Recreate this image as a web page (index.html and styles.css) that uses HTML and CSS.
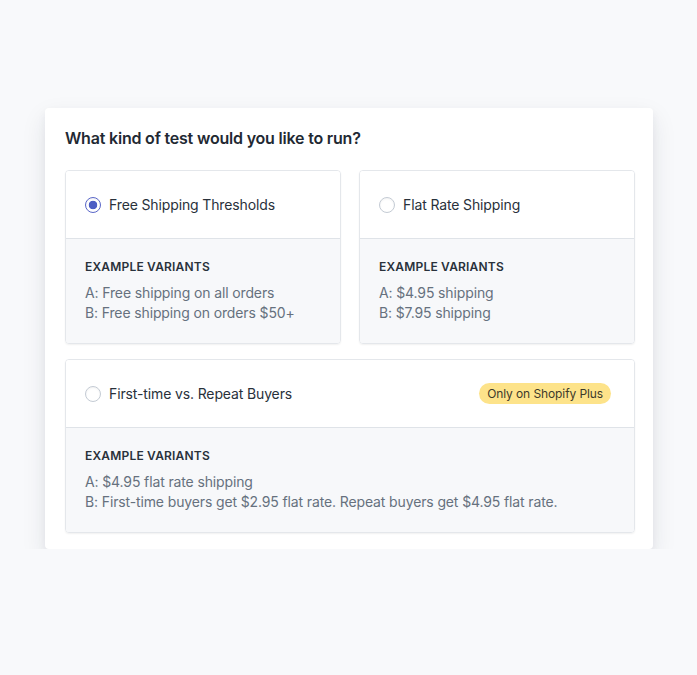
FILE: index.html
```html
<!DOCTYPE html>
<html>
<head>
<meta charset="utf-8">
<link rel="stylesheet" href="styles.css">
</head>
<body>
<div class="panel">
  <h2 class="title">What kind of test would you like to run?</h2>
  <div class="grid">
    <div class="option">
      <div class="option-head">
        <span class="radio checked"></span>
        <span class="option-label">Free Shipping Thresholds</span>
      </div>
      <div class="option-body">
        <div class="ex-label">EXAMPLE VARIANTS</div>
        <div class="ex-line">A: Free shipping on all orders</div>
        <div class="ex-line">B: Free shipping on orders $50+</div>
      </div>
    </div>
    <div class="option">
      <div class="option-head">
        <span class="radio"></span>
        <span class="option-label">Flat Rate Shipping</span>
      </div>
      <div class="option-body">
        <div class="ex-label">EXAMPLE VARIANTS</div>
        <div class="ex-line">A: $4.95 shipping</div>
        <div class="ex-line">B: $7.95 shipping</div>
      </div>
    </div>
    <div class="option wide">
      <div class="option-head">
        <span class="radio"></span>
        <span class="option-label">First-time vs. Repeat Buyers</span>
        <span class="badge">Only on Shopify Plus</span>
      </div>
      <div class="option-body">
        <div class="ex-label">EXAMPLE VARIANTS</div>
        <div class="ex-line">A: $4.95 flat rate shipping</div>
        <div class="ex-line">B: First-time buyers get $2.95 flat rate. Repeat buyers get $4.95 flat rate.</div>
      </div>
    </div>
  </div>
</div>
</body>
</html>
```
FILE: styles.css
```css
* { box-sizing: border-box; }
html, body {
  margin: 0;
  padding: 0;
  background: #f8f9fb;
  font-family: Inter, "Noto Sans", sans-serif;
}
body {
  padding: 108px 44px 0 45px;
}
.panel {
  width: 608px;
  background: #ffffff;
  border-radius: 4px;
  padding: 20px 18px 16px 20px;
  box-shadow: 0 10px 25px rgba(30, 40, 60, 0.10), 0 4px 8px rgba(30, 40, 60, 0.05);
}
.title {
  margin: 0 0 22px 0;
  font-size: 16px;
  line-height: 20px;
  font-weight: 600;
  letter-spacing: -0.2px;
  color: #1f2933;
}
.grid {
  display: grid;
  grid-template-columns: 1fr 1fr;
  column-gap: 18px;
  row-gap: 15px;
}
.option {
  border: 1px solid #e4e7eb;
  border-radius: 4px;
  overflow: hidden;
  box-shadow: 0 1px 2px rgba(0, 0, 0, 0.06);
}
.option.wide { grid-column: 1 / span 2; }
.option-head {
  display: flex;
  align-items: center;
  height: 68px;
  padding: 0 23px 0 19px;
  background: #ffffff;
  border-bottom: 1px solid #dfe3e8;
}
.radio {
  width: 16px;
  height: 16px;
  border-radius: 50%;
  border: 1px solid #c4cbd4;
  background: #fff;
  flex: none;
  margin-right: 8px;
  box-shadow: inset 0 1px 2px rgba(0,0,0,0.05);
}
.radio.checked {
  border: 1.5px solid #5a67c8;
  background: radial-gradient(circle, #4c5dc4 0, #4c5dc4 4px, #ffffff 4.6px);
}
.option-label {
  font-size: 14px;
  letter-spacing: -0.13px;
  color: #29313b;
  flex: 1;
}
.badge {
  background: #fde38a;
  color: #3d3a2a;
  font-size: 12px;
  line-height: 21px;
  letter-spacing: -0.1px;
  padding: 0 8px;
  border-radius: 11px;
}
.option-body {
  background: #f7f8fa;
  padding: 20px 19px 20px 19px;
}
.ex-label {
  font-size: 12px;
  line-height: 16px;
  font-weight: 600;
  letter-spacing: 0.2px;
  color: #29313b;
  margin-bottom: 8px;
}
.ex-line {
  font-size: 14px;
  line-height: 20px;
  letter-spacing: -0.13px;
  color: #66717e;
}
```
